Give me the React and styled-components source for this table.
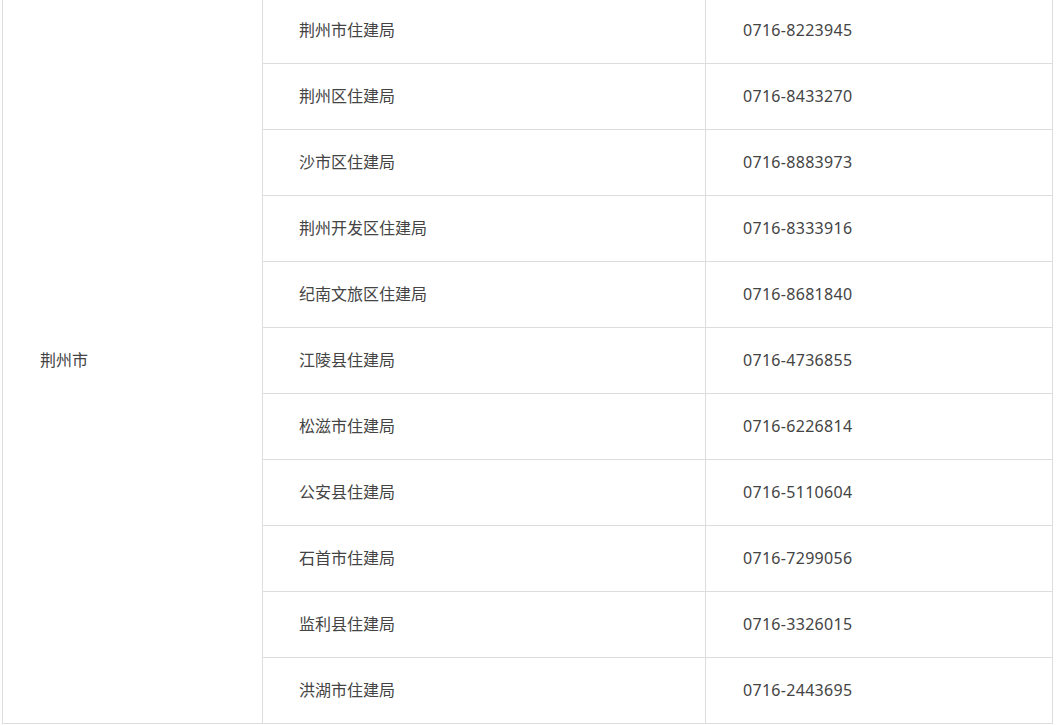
import React from "react";
import styled, { createGlobalStyle } from "styled-components";

const offices = [
  ["荆州市住建局", "0716-8223945"],
  ["荆州区住建局", "0716-8433270"],
  ["沙市区住建局", "0716-8883973"],
  ["荆州开发区住建局", "0716-8333916"],
  ["纪南文旅区住建局", "0716-8681840"],
  ["江陵县住建局", "0716-4736855"],
  ["松滋市住建局", "0716-6226814"],
  ["公安县住建局", "0716-5110604"],
  ["石首市住建局", "0716-7299056"],
  ["监利县住建局", "0716-3326015"],
  ["洪湖市住建局", "0716-2443695"],
];

const GlobalStyle = createGlobalStyle`
  html, body {
    margin: 0;
    padding: 0;
    background: #fff;
    overflow: hidden;
  }
  body {
    font-family: "Noto Sans", "Noto Sans CJK SC", sans-serif;
    color: #333;
  }
`;

const Page = styled.div`
  padding-left: 2px;
  margin-top: -3px;
`;

const Table = styled.table`
  border-collapse: collapse;
  table-layout: fixed;
  width: 1050px;
`;

const Col = styled.col`
  width: ${(p) => p.$w}px;
`;

const Cell = styled.td`
  border: 1px solid #ddd;
  height: 66px;
  padding: 0 0 2px ${(p) => p.$indent || 36}px;
  font-size: 16px;
  line-height: 20px;
  color: #444;
  vertical-align: middle;
  box-sizing: border-box;
  white-space: nowrap;
`;

const Phone = styled(Cell)`
  letter-spacing: 0.3px;
`;

export default function App() {
  return (
    <Page>
      <GlobalStyle />
      <Table>
        <colgroup>
          <Col $w={260} />
          <Col $w={443} />
          <Col $w={347} />
        </colgroup>
        <tbody>
          {offices.map(([name, phone], i) => (
            <tr key={name}>
              {i === 0 && (
                <Cell rowSpan={offices.length} $indent={37}>
                  荆州市
                </Cell>
              )}
              <Cell>{name}</Cell>
              <Phone $indent={37}>{phone}</Phone>
            </tr>
          ))}
        </tbody>
      </Table>
    </Page>
  );
}
